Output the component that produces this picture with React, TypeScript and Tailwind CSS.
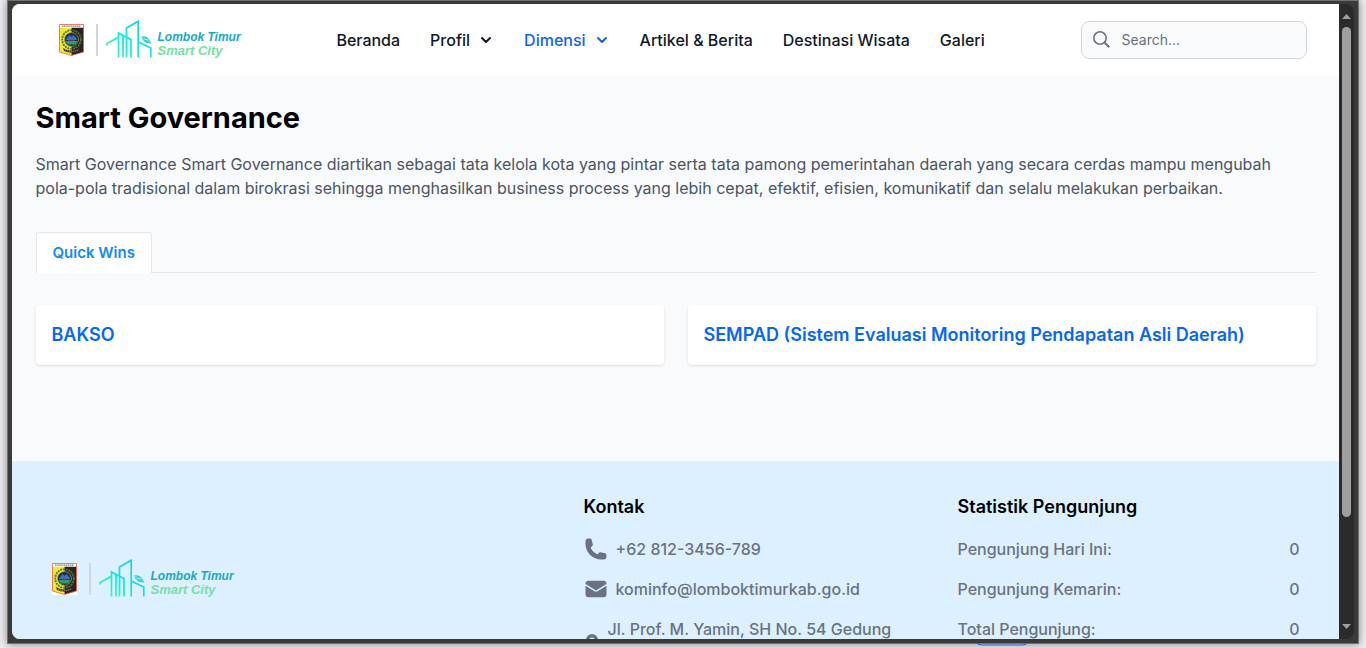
import React from "react";
import { ChevronDown } from "lucide-react";

function Crest() {
  return (
    <svg viewBox="0 0 25 32" className="h-8 w-[25px] shrink-0" role="img" aria-label="Lambang Lombok Timur">
      <path d="M0 0h25v32H0z" fill="#fff" />
      <path d="M.5 3.500h12v28L.5 28z" fill="#f5e92b" />
      <path d="M12.500 3.500h12V28l-12 3.500z" fill="#29221f" />
      <path d="M.5.5h24v27.500l-12 3.500L.5 28z" fill="none" stroke="#e2604a" strokeWidth=".8" />
      <path d="M1 1h23v2.500H1z" fill="#fff" />
      <path d="M3 2.200h19" stroke="#777" strokeWidth="1.200" strokeDasharray="1.500 .6" />
      <circle cx="12.500" cy="15.500" r="9.300" fill="none" stroke="#54743b" strokeWidth="1.800" strokeDasharray="2 .8" />
      <circle cx="12.500" cy="15.500" r="7" fill="#1b3045" stroke="#b59c3a" strokeWidth=".7" />
      <path d="M6.500 16l4-5 2 2 2-2 4 5z" fill="#2878d0" />
      <path d="M6.500 17h12l-2 3.500h-8z" fill="#29a06a" />
      <path d="M9 16.500l3.500-3 3.500 3z" fill="#8c4b8c" />
      <path d="M4 24q8.500 5 17 0l-1 3q-7.500 3.500-15 0z" fill="#3a3430" />
      <path d="M6 26q6.500 3 13 0" fill="none" stroke="#c9bd9c" strokeWidth=".8" strokeDasharray="1 1" />
    </svg>
  );
}

function CityMark({ id }: { id: string }) {
  return (
    <svg viewBox="0 0 48 40" className="h-10 w-12 shrink-0" fill="none" aria-hidden="true">
      <defs>
        <linearGradient id={id} x1="0" y1="34" x2="28" y2="4" gradientUnits="userSpaceOnUse">
          <stop offset="0" stopColor="#5cf0a0" />
          <stop offset=".45" stopColor="#0ff0d4" />
          <stop offset="1" stopColor="#10d4f2" />
        </linearGradient>
      </defs>
      <g stroke={`url(#${id})`} strokeWidth="1.700">
        <path d="M1 25.500v-2l11-6" />
        <path d="M12.500 37.500V13l12.500 6.500v18" />
        <path d="M17 37.500V16" />
        <path d="M20.500 37.500V8L32.200 1.200v36.300" />
        <path d="M32.200 22l12.600 6v9.500" />
      </g>
      <path d="M35 16.500q7-2 10.500 7-8 .5-10.500-7z" fill="#25cbd6" />
      <path d="M36 17l8.500 5.500M37 20l6-1" stroke="#fff" strokeWidth=".5" />
    </svg>
  );
}

function Brand({ id }: { id: string }) {
  return (
    <a href="#beranda" className="flex items-center">
      <Crest />
      <span className="ml-3 h-8 w-0.5 bg-gray-300" />
      <span className="ml-2 flex items-center gap-1">
        <CityMark id={id} />
        <span className="flex flex-col pt-2 font-['Liberation_Sans',sans-serif] font-bold italic">
          <span className="text-[12px] leading-[13px] text-[#16a9c4]">Lombok Timur</span>
          <span className="text-[13px] leading-[13px] text-[#77e0a3]">Smart City</span>
        </span>
      </span>
    </a>
  );
}

const navItems = [
  { label: "Beranda" },
  { label: "Profil", menu: true },
  { label: "Dimensi", menu: true, active: true },
  { label: "Artikel & Berita" },
  { label: "Destinasi Wisata" },
  { label: "Galeri" },
];

function SearchIcon() {
  return (
    <svg viewBox="0 0 20 20" className="size-5 shrink-0 text-gray-500" fill="none" stroke="currentColor" aria-hidden="true">
      <circle cx="8" cy="8" r="6.200" strokeWidth="1.600" />
      <path d="M12.800 12.800l4.400 4.400" strokeWidth="2" />
    </svg>
  );
}

function Header() {
  return (
    <header className="bg-white px-[23px]">
      <div className="mx-auto flex h-[72px] max-w-7xl items-center justify-between pr-[9px] pl-[23px]">
        <Brand id="mark-header" />
        <nav className="flex items-center gap-[30px] font-medium text-gray-900">
          {navItems.map((item) =>
            item.menu ? (
              <button
                key={item.label}
                type="button"
                className={item.active ? "flex items-center gap-2 text-[#0f62ea]" : "flex items-center gap-2"}
              >
                {item.label}
                <ChevronDown className="size-4" strokeWidth={3} />
              </button>
            ) : (
              <a key={item.label} href="#menu">
                {item.label}
              </a>
            ),
          )}
        </nav>
        <div className="flex h-[38px] w-[226px] items-center gap-2.5 rounded-lg border border-gray-300 bg-gray-50 px-2.5">
          <SearchIcon />
          <input
            type="search"
            aria-label="Search"
            placeholder="Search..."
            className="w-full min-w-0 bg-transparent text-sm outline-none placeholder:text-gray-500"
          />
        </div>
      </div>
    </header>
  );
}

function Content() {
  return (
    <main className="bg-gray-50 px-[23px] pt-6 pb-24">
      <div className="mx-auto max-w-7xl">
        <h1 className="text-[29px] leading-9 font-bold text-black">Smart Governance</h1>
        <p className="mt-4 text-gray-600">
          Smart Governance Smart Governance diartikan sebagai tata kelola kota yang pintar serta tata pamong
          pemerintahan daerah yang secara cerdas mampu mengubah
          <br />
          pola-pola tradisional dalam birokrasi sehingga menghasilkan business process yang lebih cepat, efektif,
          efisien, komunikatif dan selalu melakukan perbaikan.
        </p>
        <div className="mt-8 flex border-b border-gray-200" role="tablist">
          <button
            type="button"
            role="tab"
            aria-selected="true"
            className="-mb-px rounded-t border border-b-0 border-gray-200 bg-white px-4 py-2 text-[15px] leading-6 font-semibold text-[#0f8bfd]"
          >
            Quick Wins
          </button>
        </div>
        <div className="mt-8 grid grid-cols-2 gap-6">
          {["BAKSO", "SEMPAD (Sistem Evaluasi Monitoring Pendapatan Asli Daerah)"].map((title) => (
            <a
              key={title}
              href="#program"
              className="rounded bg-white p-4 text-lg font-semibold text-[#0866f5] shadow-sm"
            >
              {title}
            </a>
          ))}
        </div>
      </div>
    </main>
  );
}

function PhoneIcon() {
  return (
    <svg viewBox="0 0 24 24" className="size-6 shrink-0" fill="currentColor" aria-hidden="true">
      <path
        fillRule="evenodd"
        d="M1.500 4.500a3 3 0 0 1 3-3h1.372c.86 0 1.610.586 1.819 1.420l1.105 4.423a1.875 1.875 0 0 1-.694 1.955l-1.293.97c-.135.101-.164.249-.126.352a11.285 11.285 0 0 0 6.697 6.697c.103.038.25.009.352-.126l.97-1.293a1.875 1.875 0 0 1 1.955-.694l4.423 1.105c.834.209 1.420.959 1.420 1.820V19.500a3 3 0 0 1-3 3h-2.250C8.552 22.500 1.500 15.448 1.500 6.750V4.500Z"
      />
    </svg>
  );
}

function MailIcon() {
  return (
    <svg viewBox="0 0 24 24" className="size-6 shrink-0" fill="currentColor" aria-hidden="true">
      <path d="M1.500 8.670v8.580a3 3 0 0 0 3 3h15a3 3 0 0 0 3-3V8.670l-8.928 5.493a3 3 0 0 1-3.144 0L1.500 8.670Z" />
      <path d="M22.500 6.908V6.750a3 3 0 0 0-3-3h-15a3 3 0 0 0-3 3v.158l9.714 5.978a1.500 1.500 0 0 0 1.572 0L22.500 6.908Z" />
    </svg>
  );
}

function PinIcon() {
  return (
    <svg viewBox="0 0 16 24" className="h-6 w-4 shrink-0" fill="currentColor" aria-hidden="true">
      <path
        fillRule="evenodd"
        d="M8 5a6 6 0 0 0-6 6c0 4 6 12 6 12s6-8 6-12a6 6 0 0 0-6-6zm0 3.500a2.500 2.500 0 1 1 0 5 2.500 2.500 0 0 1 0-5z"
      />
    </svg>
  );
}

const stats = [
  ["Pengunjung Hari Ini:", "0"],
  ["Pengunjung Kemarin:", "0"],
  ["Total Pengunjung:", "0"],
];

function Footer() {
  return (
    <footer className="bg-[#dcf0ff] px-[23px]">
      <div className="mx-auto grid max-w-7xl grid-cols-[500px_342px_342px] justify-between px-4 py-8 font-medium text-gray-500">
        <div className="flex items-center">
          <Brand id="mark-footer" />
        </div>
        <section>
          <h2 className="text-lg font-semibold text-black">Kontak</h2>
          <address className="mt-4 flex flex-col gap-4 not-italic">
            <a href="tel:+628123456789" className="flex items-center gap-2">
              <PhoneIcon />
              +62 812-3456-789
            </a>
            <a href="mailto:kominfo@lomboktimurkab.go.id" className="flex items-center gap-2">
              <MailIcon />
              kominfo@lomboktimurkab.go.id
            </a>
            <span className="flex min-h-12 items-center gap-2">
              <PinIcon />
              <span className="self-start">Jl. Prof. M. Yamin, SH No. 54 Gedung</span>
            </span>
          </address>
        </section>
        <section>
          <h2 className="text-lg font-semibold text-black">Statistik Pengunjung</h2>
          <dl className="mt-4 flex flex-col gap-4">
            {stats.map(([label, value]) => (
              <div key={label} className="flex justify-between">
                <dt>{label}</dt>
                <dd>{value}</dd>
              </div>
            ))}
          </dl>
        </section>
      </div>
    </footer>
  );
}

function ScrollBar() {
  return (
    <div className="flex w-[15px] shrink-0 flex-col items-center rounded-r-lg bg-[#2b2b2b] py-2.5" aria-hidden="true">
      <svg viewBox="0 0 9 5" className="h-[5px] w-[9px]" fill="#a0a0a0">
        <path d="M4.500 0L9 5H0z" />
      </svg>
      <div className="mt-2 flex w-[9px] flex-1 flex-col">
        <div className="basis-[82%] rounded-full bg-[#9f9f9f]" />
      </div>
      <svg viewBox="0 0 9 5" className="h-[5px] w-[9px]" fill="#a0a0a0">
        <path d="M0 0h9L4.500 5z" />
      </svg>
    </div>
  );
}

export default function App() {
  return (
    <div className="relative flex h-screen overflow-hidden bg-[#ececf0] px-[7px] pb-1 font-['Inter',sans-serif] text-base">
      <div className="relative flex min-w-0 flex-1 border border-[#727272] bg-[#3a3a3a] pt-[3px] pr-1 pb-1 pl-1 shadow-[0_0_8px_rgba(0,0,0,0.45)]">
        <div className="min-w-0 flex-1 overflow-hidden rounded-l-lg bg-gray-50">
          <Header />
          <Content />
          <Footer />
        </div>
        <ScrollBar />
      </div>
      <svg
        viewBox="0 0 52 3"
        className="absolute bottom-0.5 left-[976px] h-[3px] w-[52px]"
        fill="none"
        stroke="#2f66e0"
        strokeWidth="1.200"
        aria-hidden="true"
      >
        <path d="M1 0q1.500 2 5 2h40q3.500 0 5-2" />
      </svg>
    </div>
  );
}
